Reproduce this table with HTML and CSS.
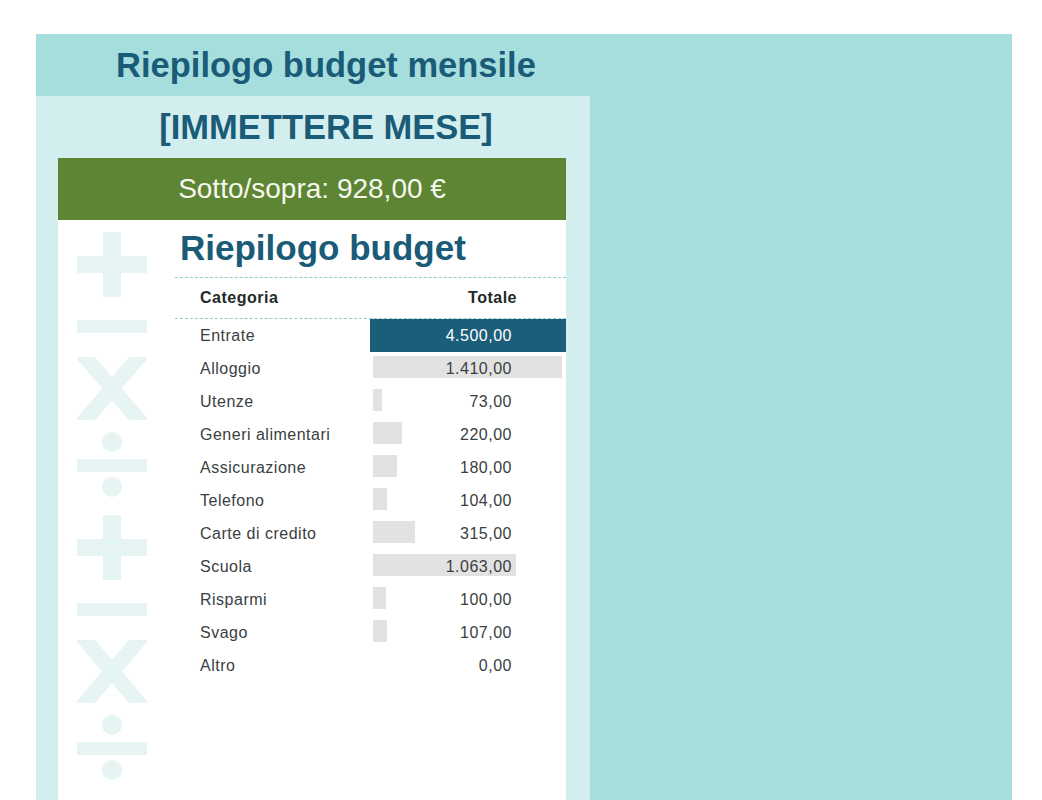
FILE: index.html
```html
<!DOCTYPE html>
<html lang="it">
<head>
    <meta charset="UTF-8">
    <meta name="viewport" content="width=device-width, initial-scale=1.0">
    <title>Riepilogo budget mensile</title>
    <link rel="stylesheet" href="styles.css">
</head>
<body>
    <div class="sheet">
        <!-- Titolo -->
        <div class="sheet-header">
            <h1 class="sheet-title">Riepilogo budget mensile</h1>
        </div>

        <div class="panel">
            <div class="month">[IMMETTERE MESE]</div>

            <div class="card">
                <div class="balance">Sotto/sopra: 928,00 €</div>

                <div class="card-body">
                    <!-- Simboli decorativi -->
                    <div class="ops">
                        <svg width="70" height="566" viewBox="0 0 70 566">
                            <defs>
                                <clipPath id="x-clip"><rect x="0" y="125" width="70" height="63"/></clipPath>
                                <g id="ops-set">
                                    <rect x="0" y="24" width="70" height="17"/>
                                    <rect x="26" y="0" width="18" height="65"/>
                                    <rect x="0" y="88" width="70" height="13"/>
                                    <g clip-path="url(#x-clip)">
                                        <line x1="4" y1="120" x2="66" y2="193" stroke="#e6f4f4" stroke-width="15"/>
                                        <line x1="66" y1="120" x2="4" y2="193" stroke="#e6f4f4" stroke-width="15"/>
                                    </g>
                                    <circle cx="35" cy="210" r="10"/>
                                    <rect x="0" y="227" width="70" height="13"/>
                                    <circle cx="35" cy="255" r="10"/>
                                </g>
                            </defs>
                            <g fill="#e6f4f4">
                                <use href="#ops-set"/>
                                <use href="#ops-set" y="283"/>
                            </g>
                        </svg>
                    </div>

                    <div class="summary">
                        <h2 class="summary-title">Riepilogo budget</h2>

                        <div class="row head">
                            <div class="cat">Categoria</div>
                            <div class="val">Totale</div>
                        </div>

                        <div class="row income">
                            <div class="cat">Entrate</div>
                            <div class="val">4.500,00</div>
                        </div>
                        <div class="row">
                            <div class="cat">Alloggio</div>
                            <div class="val"><span class="bar" style="width: 189px"></span><span class="num">1.410,00</span></div>
                        </div>
                        <div class="row">
                            <div class="cat">Utenze</div>
                            <div class="val"><span class="bar" style="width: 9px"></span><span class="num">73,00</span></div>
                        </div>
                        <div class="row">
                            <div class="cat">Generi alimentari</div>
                            <div class="val"><span class="bar" style="width: 29px"></span><span class="num">220,00</span></div>
                        </div>
                        <div class="row">
                            <div class="cat">Assicurazione</div>
                            <div class="val"><span class="bar" style="width: 24px"></span><span class="num">180,00</span></div>
                        </div>
                        <div class="row">
                            <div class="cat">Telefono</div>
                            <div class="val"><span class="bar" style="width: 14px"></span><span class="num">104,00</span></div>
                        </div>
                        <div class="row">
                            <div class="cat">Carte di credito</div>
                            <div class="val"><span class="bar" style="width: 42px"></span><span class="num">315,00</span></div>
                        </div>
                        <div class="row">
                            <div class="cat">Scuola</div>
                            <div class="val"><span class="bar" style="width: 143px"></span><span class="num">1.063,00</span></div>
                        </div>
                        <div class="row">
                            <div class="cat">Risparmi</div>
                            <div class="val"><span class="bar" style="width: 13px"></span><span class="num">100,00</span></div>
                        </div>
                        <div class="row">
                            <div class="cat">Svago</div>
                            <div class="val"><span class="bar" style="width: 14px"></span><span class="num">107,00</span></div>
                        </div>
                        <div class="row">
                            <div class="cat">Altro</div>
                            <div class="val"><span class="num">0,00</span></div>
                        </div>
                    </div>
                </div>
            </div>
        </div>
    </div>
</body>
</html>
```

FILE: styles.css
```css
* {
    margin: 0;
    padding: 0;
    box-sizing: border-box;
}
html, body {
    width: 100%;
    height: 100%;
    overflow: hidden;
    background-color: white;
}
body {
    padding: 34px 30px 0 36px;
    font-family: "Liberation Sans", Arial, sans-serif;
}
.sheet {
    width: 976px;
    height: 800px;
    background-color: #a6dede;
    display: flex;
    flex-direction: column;
}
.sheet-header {
    height: 62px;
    width: 580px;
    display: flex;
    align-items: center;
    justify-content: center;
}
.sheet-title {
    font-size: 34.5px;
    font-weight: bold;
    color: #1a5b77;
}
.panel {
    width: 554px;
    flex: 1;
    background-color: #d3eeee;
    display: flex;
    flex-direction: column;
}
.month {
    height: 62px;
    padding-left: 26px;
    display: flex;
    align-items: center;
    justify-content: center;
    font-size: 34.5px;
    font-weight: bold;
    color: #1a5b77;
}
.card {
    margin-left: 22px;
    width: 508px;
    flex: 1;
    background-color: white;
    display: flex;
    flex-direction: column;
}
.balance {
    height: 62px;
    background-color: #5e8533;
    color: #f4f8ee;
    font-size: 28px;
    display: flex;
    align-items: center;
    justify-content: center;
}
.card-body {
    display: flex;
    flex: 1;
}
.ops {
    width: 117px;
    padding: 12px 0 0 19px;
}
.ops svg {
    display: block;
}
.summary {
    flex: 1;
}
.summary-title {
    font-size: 35px;
    line-height: 40px;
    font-weight: bold;
    color: #1a5b77;
    padding: 8px 0 9px 5px;
}
.row {
    display: flex;
    height: 33px;
    font-size: 16px;
    letter-spacing: 0.5px;
    color: #3a403f;
}
.row .cat {
    width: 195px;
    padding-left: 25px;
    display: flex;
    align-items: center;
}
.row .val {
    flex: 1;
    position: relative;
    display: flex;
    align-items: center;
    justify-content: flex-end;
    padding-right: 54px;
}
.row.head {
    height: 42px;
    font-weight: bold;
    color: #232a28;
    border-top: 1px dashed #93cbc6;
    border-bottom: 1px dashed #93cbc6;
}
.row.head .val {
    padding-right: 49px;
}
.row.income .val {
    background-color: #1b5e79;
    color: white;
}
.bar {
    position: absolute;
    left: 3px;
    top: 4px;
    height: 22px;
    background-color: #e2e2e2;
}
.num {
    position: relative;
}
```
